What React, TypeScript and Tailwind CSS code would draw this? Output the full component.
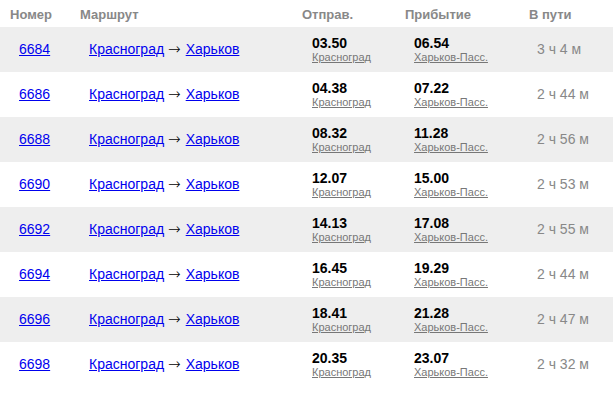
import React from "react";

const rows = [
  ["6684", "03.50", "06.54", "3 ч 4 м"],
  ["6686", "04.38", "07.22", "2 ч 44 м"],
  ["6688", "08.32", "11.28", "2 ч 56 м"],
  ["6690", "12.07", "15.00", "2 ч 53 м"],
  ["6692", "14.13", "17.08", "2 ч 55 м"],
  ["6694", "16.45", "19.29", "2 ч 44 м"],
  ["6696", "18.41", "21.28", "2 ч 47 м"],
  ["6698", "20.35", "23.07", "2 ч 32 м"],
];

export default function App() {
  return (
    <div
      className="w-[613px] h-[393px] bg-white overflow-hidden"
      style={{ fontFamily: '"Liberation Sans", Arial, sans-serif' }}
    >
      <div className="flex h-[27px] items-center text-[13px] font-bold text-[#888888] pt-[2px]">
        <div className="w-[80px] pl-[10px]">Номер</div>
        <div className="w-[222px]">Маршрут</div>
        <div className="w-[103px]">Отправ.</div>
        <div className="w-[124px]">Прибытие</div>
        <div className="flex-1">В пути</div>
      </div>
      {rows.map(([num, dep, arr, dur], i) => (
        <div
          key={num}
          className={`flex h-[45px] items-center ${i % 2 === 0 ? "bg-[#eeeeee]" : "bg-white"}`}
        >
          <div className="w-[80px] pl-[19px] text-[14px]">
            <a href="#" className="text-[#0000ee] underline">{num}</a>
          </div>
          <div className="w-[222px] pl-[9px] text-[14px] text-black flex items-baseline">
            <a href="#" className="text-[#0000ee] underline">Красноград</a>
            <span className="ml-[4px] mr-[5px] font-['DejaVu_Sans',sans-serif] text-[15px] font-extralight">→</span>
            <a href="#" className="text-[#0000ee] underline">Харьков</a>
          </div>
          <div className="w-[103px] pl-[10px] flex flex-col">
            <span className="text-[14px] font-bold leading-[16px] text-black">{dep}</span>
            <a href="#" className="text-[11px] leading-[13px] text-[#777777] underline">Красноград</a>
          </div>
          <div className="w-[124px] pl-[9px] flex flex-col">
            <span className="text-[14px] font-bold leading-[16px] text-black">{arr}</span>
            <a href="#" className="text-[11px] leading-[13px] text-[#777777] underline">Харьков-Пасс.</a>
          </div>
          <div className="flex-1 pl-[8px] text-[14px] text-[#888888]">{dur}</div>
        </div>
      ))}
    </div>
  );
}
